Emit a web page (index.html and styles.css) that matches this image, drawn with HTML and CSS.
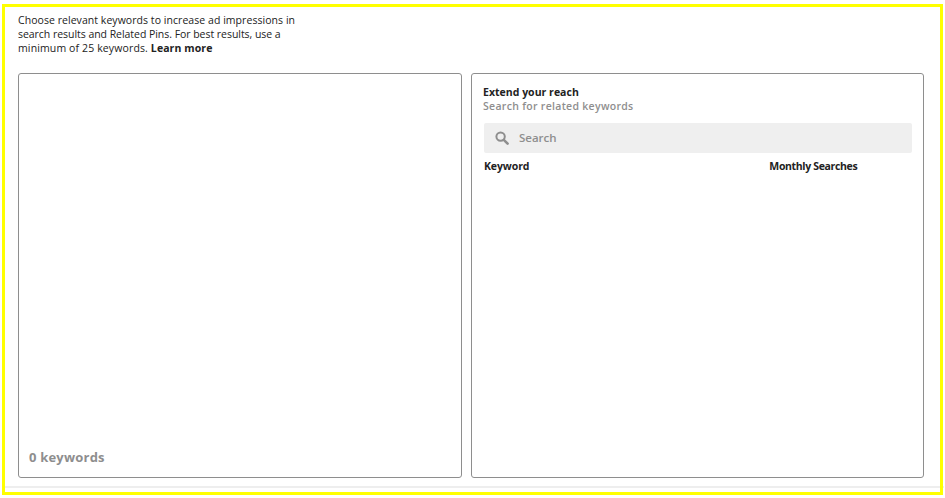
FILE: index.html
```html
<!DOCTYPE html>
<html lang="en">
<head>
<meta charset="utf-8">
<title>Keywords</title>
<link rel="stylesheet" href="styles.css">
</head>
<body>
<main class="page">
  <p class="intro">Choose relevant keywords to increase ad impressions in<br><span class="line2">search results and Related Pins. For best results, use a</span><br><span class="line3">minimum of 25 keywords. <b class="more">Learn more</b></span></p>
  <div class="panels">
    <section class="panel left">
      <div class="count">0 keywords</div>
    </section>
    <section class="panel right">
      <h2 class="title">Extend your reach</h2>
      <p class="sub">Search for related keywords</p>
      <div class="search">
        <svg class="glass" width="14" height="14" viewBox="0 0 14 14"><circle cx="5.6" cy="5.6" r="4.2" fill="none" stroke="#8e8e8e" stroke-width="2"/><path d="M8.8 8.8 12.6 12.6" stroke="#8e8e8e" stroke-width="2.6" stroke-linecap="round"/></svg>
        <span class="ph">Search</span>
      </div>
      <div class="heads"><span>Keyword</span><span class="monthly">Monthly Searches</span></div>
    </section>
  </div>
  <div class="rule"></div>
</main>
<div class="outline"></div>
</body>
</html>
```
FILE: styles.css
```css
html, body { margin: 0; padding: 0; background: #fff; }
body { position: relative; width: 945px; height: 498px; overflow: hidden; font-family: "Open Sans", "Noto Sans", sans-serif; color: #222; }
.page { box-sizing: border-box; height: 498px; padding: 13px 0 0 18px; display: flex; flex-direction: column; }
.outline { position: absolute; box-sizing: border-box; left: 2px; top: 4px; width: 941px; height: 491px; border: 3px solid #ff0; pointer-events: none; }
.intro { margin: 0; font-size: 10.5px; line-height: 14px; height: 60px; letter-spacing: 0.05px; }
.line2 { letter-spacing: -0.04px; }
.line3 { letter-spacing: 0.13px; }
.more { font-weight: 700; letter-spacing: 0.1px; }
.panels { display: flex; gap: 9px; height: 405px; }
.panel { box-sizing: border-box; border: 1px solid #8e8e8e; border-radius: 3px; height: 405px; display: flex; flex-direction: column; }
.left { width: 444px; justify-content: flex-end; padding: 0 0 11px 10px; }
.right { width: 453px; padding: 11px 11px 0 11px; }
.count { font-size: 13px; font-weight: 700; color: #8e8e8e; line-height: 18px; letter-spacing: 0.2px; }
.title { margin: 0; font-size: 10.5px; font-weight: 700; line-height: 14px; letter-spacing: 0.02px; }
.sub { margin: 0; font-size: 10.5px; font-weight: 600; line-height: 14px; color: #8e8e8e; letter-spacing: 0.3px; }
.search { margin: 10px 0 0 1px; height: 30px; background: #efefef; border-radius: 2px; display: flex; align-items: center; padding-left: 11px; gap: 10px; width: 428px; box-sizing: border-box; }
.ph { font-size: 11.5px; font-weight: 600; color: #8e8e8e; padding-bottom: 2px; }
.heads { display: flex; margin-top: 6px; padding-left: 1px; font-size: 10.5px; font-weight: 700; line-height: 14px; letter-spacing: -0.1px; }
.monthly { margin-left: 240px; letter-spacing: -0.35px; }
.rule { height: 2px; background: #eee; margin: 8px 1px 0 -13px; }
```
